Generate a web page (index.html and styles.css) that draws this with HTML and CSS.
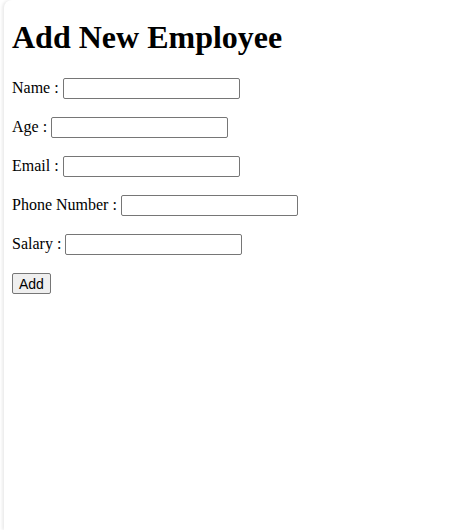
FILE: index.html
```html
<!DOCTYPE html>
<html>
<head>
<meta charset="utf-8">
<title>Add New Employee</title>
<link rel="stylesheet" href="styles.css">
</head>
<body>
<div class="frame">
  <h1 class="title">Add New Employee</h1>
  <form class="form">
    <p class="row">Name : <input class="field" type="text"></p>
    <p class="row">Age : <input class="field" type="text"></p>
    <p class="row">Email : <input class="field" type="text"></p>
    <p class="row">Phone Number : <input class="field" type="text"></p>
    <p class="row">Salary : <input class="field" type="text"></p>
    <p class="row"><button class="btn" type="button">Add</button></p>
  </form>
</div>
</body>
</html>
```
FILE: styles.css
```css
html, body {
  margin: 0;
  padding: 0;
  height: 100%;
  background: #ffffff;
}
body {
  font-family: "Liberation Serif", "Times New Roman", serif;
  font-size: 16px;
  color: #000;
}
.frame {
  margin-left: 4px;
  min-height: 100%;
  box-sizing: border-box;
  padding: 1px 8px;
  background: #fff;
  border-top-left-radius: 8px;
  box-shadow: -2px 0 3px rgba(0, 0, 0, 0.08);
}
.title {
  font-size: 32px;
  font-weight: bold;
  margin: 18px 0 22px;
}
.form {
  margin: 0;
}
.row {
  margin: 18px 0;
}
.field {
  box-sizing: border-box;
  width: 177px;
  height: 21px;
  border: 1px solid #767676;
  border-radius: 2px;
  padding: 1px 2px;
  font-family: "Liberation Sans", Arial, sans-serif;
  font-size: 13.33px;
  vertical-align: baseline;
  background: #fff;
}
.btn {
  font-family: "Liberation Sans", Arial, sans-serif;
  font-size: 14px;
  padding: 1px 6px;
  height: 21px;
  border: 1px solid #767676;
  border-radius: 2px;
  background: #efefef;
  color: #000;
}
```
